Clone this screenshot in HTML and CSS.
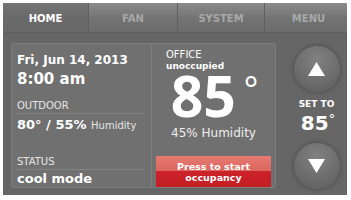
FILE: index.html
```html
<!DOCTYPE html>
<html>
<head>
<meta charset="utf-8">
<link rel="stylesheet" href="styles.css">
</head>
<body>
<div class="screen">
  <div class="tabs">
    <div class="tab active t-home">HOME</div>
    <div class="tab t-fan">FAN</div>
    <div class="tab t-sys">SYSTEM</div>
    <div class="tab t-menu">MENU</div>
  </div>
  <div class="content">
    <div class="panel">
      <div class="left">
        <div class="date">Fri, Jun 14, 2013</div>
        <div class="time">8:00 am</div>
        <div class="label outdoor">OUTDOOR</div>
        <div class="value">80° / 55% <span class="small">Humidity</span></div>
        <div class="label status">STATUS</div>
        <div class="value">cool mode</div>
      </div>
      <div class="right">
        <div class="zone">OFFICE</div>
        <div class="occ">unoccupied</div>
        <div class="temp"><span class="digits">85</span><span class="deg">°</span></div>
        <div class="hum">45% Humidity</div>
        <div class="occbtn">Press to start<br>occupancy</div>
      </div>
    </div>
    <div class="setcol">
      <div class="circle"><svg width="17" height="14" viewBox="0 0 17 14"><polygon points="8.5,0 17,14 0,14" fill="#fff"/></svg></div>
      <div class="setto">SET TO</div>
      <div class="settemp">85<span class="sdeg">°</span></div>
      <div class="circle down"><svg width="17" height="14" viewBox="0 0 17 14"><polygon points="0,0 17,0 8.5,14" fill="#fff"/></svg></div>
    </div>
  </div>
</div>
</body>
</html>
```
FILE: styles.css
```css
html, body {
  margin: 0;
  padding: 0;
  background: #fff;
}
body {
  font-family: "DejaVu Sans", "Liberation Sans", sans-serif;
  color: #fff;
}
.screen {
  margin: 3px 4px 0 3px;
  width: 344px;
  height: 192px;
  background: #666666;
  display: flex;
  flex-direction: column;
}
.tabs {
  display: flex;
  height: 29px;
  background: linear-gradient(#8b8b8b, #727272 55%, #6c6c6c);
  border-bottom: 1px solid #5e5e5e;
}
.tab {
  display: flex;
  align-items: center;
  justify-content: center;
  padding-top: 2px;
  box-sizing: border-box;
  font-size: 10px;
  font-weight: 700;
  color: #a8a8a8;
  border-left: 1px solid #5f5f5f;
}
.t-home { width: 85px; }
.t-fan { width: 89px; }
.t-sys { width: 87px; }
.t-menu { flex: 1; padding-left: 5px; }
.tab.active {
  border-left: none;
  color: #fff;
  background: linear-gradient(#747474, #6a6a6a 50%, #686868);
}
.content {
  flex: 1;
  display: flex;
  padding: 10px 0 0 8px;
}
.panel {
  width: 263px;
  height: 143px;
  background: #707070;
  border: 1px solid #7c7c7c;
  border-radius: 3px;
  display: flex;
}
.left {
  width: 140px;
  box-sizing: border-box;
  padding: 9px 0 0 5px;
  border-right: 1px solid #7f7f7f;
}
.date {
  font-size: 12px;
  font-weight: 700;
  line-height: 15px;
}
.time {
  margin-top: 2px;
  font-size: 15px;
  font-weight: 700;
  line-height: 18px;
}
.label {
  font-size: 10px;
  line-height: 12px;
  color: #e6e6e6;
  border-bottom: 1px solid #848484;
  width: 127px;
  padding-bottom: 1px;
}
.outdoor { margin-top: 12px; }
.status { margin-top: 21px; }
.value {
  margin-top: 2px;
  font-size: 13px;
  font-weight: 700;
  line-height: 18px;
}
.status + .value { margin-top: 0; }
.small {
  font-size: 10px;
  font-weight: 400;
  color: #e6e6e6;
}
.right {
  flex: 1;
  display: flex;
  flex-direction: column;
  align-items: center;
  padding-top: 5px;
}
.zone, .occ {
  align-self: flex-start;
  padding-left: 14px;
}
.zone {
  font-size: 10px;
  line-height: 12px;
}
.occ {
  font-size: 9px;
  font-weight: 700;
  line-height: 11px;
}
.temp {
  display: flex;
  align-items: flex-start;
  margin-top: 1px;
  padding-left: 2px;
}
.digits {
  font-family: "Open Sans", "DejaVu Sans", sans-serif;
  font-size: 57px;
  font-weight: 700;
  line-height: 44px;
}
.deg {
  font-family: "Open Sans", "DejaVu Sans", sans-serif;
  font-size: 34px;
  font-weight: 400;
  line-height: 34px;
  margin-top: -1px;
  margin-left: 8px;
}
.hum {
  margin-top: 9px;
  font-size: 12px;
  line-height: 14px;
  color: #eeeeee;
}
.occbtn {
  margin-top: 16px;
  width: 115px;
  height: 31px;
  font-size: 9.5px;
  font-weight: 700;
  line-height: 11px;
  text-align: center;
  display: flex;
  align-items: center;
  justify-content: center;
  background: linear-gradient(#e67b72 0%, #dc665e 48%, #cc2229 48%, #c41e25 100%);
}
.setcol {
  flex: 1;
  display: flex;
  flex-direction: column;
  align-items: center;
  padding: 3px 0 0 10px;
}
.circle {
  width: 46px;
  height: 46px;
  flex: none;
  border-radius: 50%;
  background: radial-gradient(circle at 50% 30%, #818181 0%, #6d6d6d 55%, #5b5b5b 100%);
  box-shadow: 0 0 0 1px #5c5c5c, 0 0 3px 2px rgba(80, 80, 80, 0.6);
  display: flex;
  align-items: center;
  justify-content: center;
}
.setto {
  margin-top: 7px;
  font-size: 9px;
  font-weight: 700;
  line-height: 11px;
}
.settemp {
  margin-top: 2px;
  padding-left: 3px;
  font-size: 20px;
  font-weight: 700;
  line-height: 22px;
}
.sdeg {
  font-size: 13px;
  font-weight: 400;
  vertical-align: top;
  line-height: 14px;
}
.circle.down {
  margin-top: 9px;
}
```
